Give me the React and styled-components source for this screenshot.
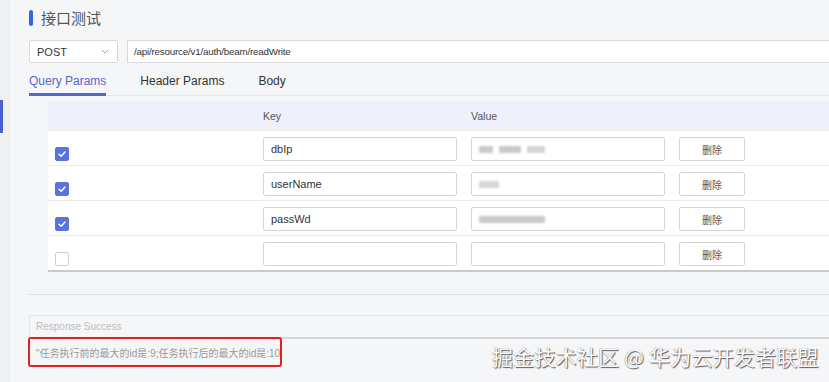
import styled, { createGlobalStyle } from 'styled-components';

const GlobalStyle = createGlobalStyle`
  html, body {
    margin: 0;
    padding: 0;
    background: #f5f6f8;
    font-family: "Liberation Sans", "Noto Sans CJK SC", Arial, sans-serif;
  }
  * {
    box-sizing: border-box;
  }
`;

const Page = styled.div`
  position: relative;
  display: flex;
  width: 829px;
  height: 382px;
  overflow: hidden;
  background: #f5f6f8;
`;

const Sidebar = styled.div`
  position: relative;
  width: 10px;
  flex-shrink: 0;
  background: #f0f1f3;
  border-right: 1px solid #e6e7ea;
  .active {
    position: absolute;
    left: 0;
    top: 100px;
    width: 3px;
    height: 33px;
    background: #4a5fd0;
  }
`;

const Main = styled.div`
  flex: 1;
  min-width: 0;
  padding: 8px 0 0 19px;
  display: flex;
  flex-direction: column;
`;

const TitleRow = styled.div`
  display: flex;
  align-items: center;
  gap: 8px;
  height: 20px;
  .bar {
    width: 4px;
    height: 16px;
    border-radius: 2px;
    background: #3366e6;
  }
  h2 {
    margin: 0;
    font-family: "Noto Sans CJK SC", sans-serif;
    font-weight: 400;
    font-size: 15px;
    color: #555;
    line-height: 20px;
  }
`;

const RequestRow = styled.div`
  display: flex;
  gap: 9px;
  margin-top: 12px;
  height: 23px;
`;

const Select = styled.div`
  width: 89px;
  height: 23px;
  flex-shrink: 0;
  background: #fff;
  border: 1px solid #d9d9d9;
  border-radius: 2px;
  display: flex;
  align-items: center;
  justify-content: space-between;
  padding: 0 8px 0 7px;
  font-size: 11px;
  color: #333;
`;

const UrlInput = styled.div`
  width: 760px;
  flex-shrink: 0;
  height: 23px;
  background: #fff;
  border: 1px solid #d9d9d9;
  border-right: none;
  display: flex;
  align-items: center;
  padding-left: 6px;
  font-size: 9.8px;
  letter-spacing: -0.2px;
  color: #333;
`;

const Tabs = styled.div`
  display: flex;
  gap: 34px;
  margin-top: 10px;
  border-bottom: 1px solid #e8e9ec;
  width: 900px;
`;

const Tab = styled.div`
  font-size: 12px;
  line-height: 16px;
  padding-bottom: 4px;
  color: ${(p) => (p.active ? '#5567cf' : '#333')};
  border-bottom: 3px solid ${(p) => (p.active ? '#5567cf' : 'transparent')};
  margin-bottom: -1px;
`;

const Table = styled.div`
  margin: 5px 0 0 19px;
  width: 820px;
  box-shadow: 0 2px 0 #c9cacc;
`;

const HeadRow = styled.div`
  display: grid;
  grid-template-columns: 215px 208px 208px 66px;
  height: 29px;
  align-items: center;
  background: #eef1f9;
  font-size: 10.5px;
  color: #555;
`;

const Row = styled.div`
  display: grid;
  grid-template-columns: 215px 208px 208px 66px;
  align-items: end;
  height: 35px;
  padding: 6px 0 5px;
  background: #fff;
  border-top: 1px solid #ebebeb;
`;

const CheckCell = styled.div`
  padding-left: 7px;
  display: flex;
  align-items: flex-end;
`;

const Check = styled.div`
  width: 14px;
  height: 14px;
  border-radius: 2px;
  background: ${(p) => (p.checked ? '#5a72dc' : '#fff')};
  border: 1px solid ${(p) => (p.checked ? '#5a72dc' : '#cfcfcf')};
  display: flex;
  align-items: center;
  justify-content: center;
`;

const Field = styled.div`
  width: 194px;
  height: 24px;
  background: #fff;
  border: 1px solid #d4d4d4;
  border-radius: 2px;
  display: flex;
  align-items: center;
  gap: 6px;
  padding-left: 7px;
  font-size: 11px;
  color: #333;
`;

const Blur = styled.span`
  display: inline-block;
  width: ${(p) => p.w}px;
  height: 7px;
  background: ${(p) => p.tone || '#c9c9c9'};
  filter: blur(1.2px);
  border-radius: 1px;
`;

const DeleteButton = styled.div`
  width: 66px;
  height: 24px;
  background: #fff;
  border: 1px solid #d4d4d4;
  border-radius: 2px;
  display: flex;
  align-items: center;
  justify-content: center;
  font-family: "Noto Sans CJK SC", sans-serif;
  font-size: 10px;
  color: #555;
`;

const Divider = styled.div`
  margin-top: 24px;
  height: 1px;
  background: #dedfe2;
  width: 820px;
`;

const ResponseBox = styled.div`
  margin-top: 20px;
  width: 820px;
  height: 24px;
  border: 1px solid #e3e4e6;
  border-bottom: 2px solid #d6d7da;
  border-right: none;
  display: flex;
  align-items: center;
  padding-left: 6px;
  font-size: 10px;
  color: #bcbcbc;
`;

const ResultText = styled.div`
  align-self: flex-start;
  margin: -2px 0 0 -1px;
  width: 254px;
  height: 30px;
  border: 2px solid #e3211e;
  border-radius: 3px;
  display: flex;
  align-items: center;
  padding-left: 6px;
  font-family: "Liberation Sans", "Noto Sans CJK SC", sans-serif;
  font-size: 10px;
  color: #9a9a9a;
  white-space: nowrap;
`;

const Watermark = styled.div`
  position: absolute;
  left: 492px;
  top: 342px;
  font-family: "Noto Sans CJK SC", sans-serif;
  font-size: 21px;
  line-height: 28px;
  color: #fbfbfb;
  letter-spacing: 0.2px;
  text-shadow: 1px 1px 1px #5a5a5a, -0.5px -0.5px 0 #a0a0a0;
`;

const CheckMark = () => (
  <svg width="10" height="10" viewBox="0 0 10 10">
    <path d="M2 5.2 L4.2 7.2 L8 3" fill="none" stroke="#fff" strokeWidth="1.5" strokeLinecap="round" strokeLinejoin="round" />
  </svg>
);

const Chevron = () => (
  <svg width="8" height="5" viewBox="0 0 8 5">
    <path d="M0.8 0.8 L4 4 L7.2 0.8" fill="none" stroke="#999" strokeWidth="0.9" />
  </svg>
);

const params = [
  { checked: true, key: 'dbIp', value: [{ w: 14 }, { w: 22 }, { w: 18, tone: '#d4d4d4' }] },
  { checked: true, key: 'userName', value: [{ w: 20, tone: '#d6d6d6' }] },
  { checked: true, key: 'passWd', value: [{ w: 66 }] },
  { checked: false, key: '', value: [] },
];

const App = () => (
  <>
    <GlobalStyle />
    <Page>
      <Sidebar>
        <div className="active" />
      </Sidebar>
      <Main>
        <TitleRow>
          <div className="bar" />
          <h2>接口测试</h2>
        </TitleRow>
        <RequestRow>
          <Select>
            POST
            <Chevron />
          </Select>
          <UrlInput>/api/resource/v1/auth/beam/readWrite</UrlInput>
        </RequestRow>
        <Tabs>
          <Tab active>Query Params</Tab>
          <Tab>Header Params</Tab>
          <Tab>Body</Tab>
        </Tabs>
        <Table>
          <HeadRow>
            <span />
            <span>Key</span>
            <span>Value</span>
            <span />
          </HeadRow>
          {params.map((p, i) => (
            <Row key={i}>
              <CheckCell>
                <Check checked={p.checked}>{p.checked && <CheckMark />}</Check>
              </CheckCell>
              <Field>{p.key}</Field>
              <Field>
                {p.value.map((b, j) => (
                  <Blur key={j} w={b.w} tone={b.tone} />
                ))}
              </Field>
              <DeleteButton>删除</DeleteButton>
            </Row>
          ))}
        </Table>
        <Divider />
        <ResponseBox>Response Success</ResponseBox>
        <ResultText>"任务执行前的最大的id是:9;任务执行后的最大的id是:10</ResultText>
      </Main>
      <Watermark>掘金技术社区 @ 华为云开发者联盟</Watermark>
    </Page>
  </>
);

export default App;
